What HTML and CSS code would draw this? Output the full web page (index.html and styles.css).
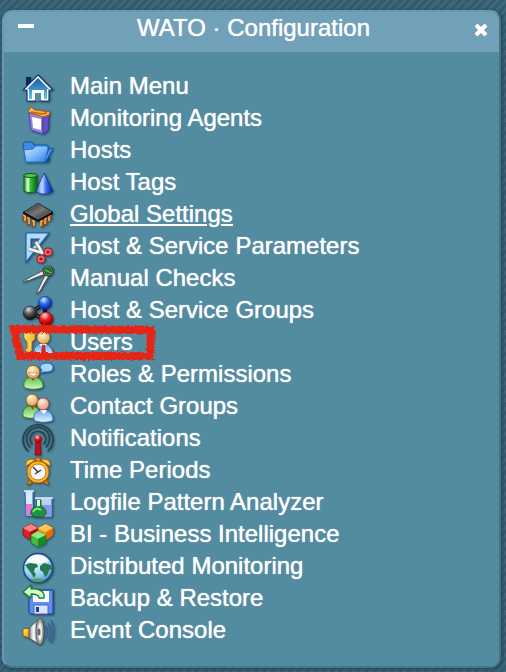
FILE: index.html
```html
<!DOCTYPE html>
<html lang="en">
<head>
<meta charset="utf-8">
<title>WATO · Configuration</title>
<link rel="stylesheet" href="styles.css">
</head>
<body>
<svg class="defs" aria-hidden="true">
  <defs>
    <linearGradient id="blue" x1="0" y1="0" x2="1" y2="1"><stop offset="0" stop-color="#d0ecff"/><stop offset=".5" stop-color="#7cbcf8"/><stop offset="1" stop-color="#2a78e0"/></linearGradient>
    <linearGradient id="roof" x1="0" y1="0" x2="0" y2="1"><stop offset="0" stop-color="#185a9d"/><stop offset="1" stop-color="#63c4f4"/></linearGradient>
    <linearGradient id="cyl" x1="0" y1="0" x2="1" y2="0"><stop offset="0" stop-color="#0b8d1e"/><stop offset=".3" stop-color="#e6ffe0"/><stop offset=".5" stop-color="#35bd35"/><stop offset="1" stop-color="#04680f"/></linearGradient>
    <linearGradient id="cone" x1="0" y1="0" x2="1" y2="0"><stop offset="0" stop-color="#2856d8"/><stop offset=".35" stop-color="#c8dcff"/><stop offset=".6" stop-color="#3a6ced"/><stop offset="1" stop-color="#0a1a9a"/></linearGradient>
    <linearGradient id="metal" x1="0" y1="0" x2="1" y2="0"><stop offset="0" stop-color="#777"/><stop offset=".4" stop-color="#fafafa"/><stop offset="1" stop-color="#777"/></linearGradient>
    <linearGradient id="chip" x1="0" y1="0" x2="1" y2="1"><stop offset="0" stop-color="#222"/><stop offset=".5" stop-color="#777"/><stop offset="1" stop-color="#222"/></linearGradient>
    <linearGradient id="gold" x1="0" y1="0" x2="1" y2="1"><stop offset="0" stop-color="#fff27a"/><stop offset="1" stop-color="#f08a00"/></linearGradient>
    <linearGradient id="greenbody" x1="0" y1="0" x2="0" y2="1"><stop offset="0" stop-color="#5cc24a"/><stop offset="1" stop-color="#d2f8b8"/></linearGradient>
    <linearGradient id="bluebody" x1="0" y1="0" x2="0" y2="1"><stop offset="0" stop-color="#6ba6ee"/><stop offset="1" stop-color="#e4f3ff"/></linearGradient>
    <radialGradient id="skin" cx=".4" cy=".3" r=".7"><stop offset="0" stop-color="#fff5d5"/><stop offset="1" stop-color="#e2a34f"/></radialGradient>
    <radialGradient id="pink" cx=".4" cy=".3" r=".7"><stop offset="0" stop-color="#fff0e5"/><stop offset="1" stop-color="#ee9280"/></radialGradient>
    <radialGradient id="ballblue" cx=".4" cy=".25" r=".7"><stop offset="0" stop-color="#d8eaff"/><stop offset=".5" stop-color="#286cf0"/><stop offset="1" stop-color="#0a26a8"/></radialGradient>
    <radialGradient id="ballred" cx=".4" cy=".25" r=".7"><stop offset="0" stop-color="#ffdede"/><stop offset=".5" stop-color="#f01818"/><stop offset="1" stop-color="#960000"/></radialGradient>
    <radialGradient id="ballgray" cx=".4" cy=".25" r=".7"><stop offset="0" stop-color="#ddd"/><stop offset=".5" stop-color="#555"/><stop offset="1" stop-color="#111"/></radialGradient>
    <radialGradient id="globe" cx=".4" cy=".25" r=".8"><stop offset="0" stop-color="#fff"/><stop offset=".6" stop-color="#9fd3f5"/><stop offset="1" stop-color="#3f88d0"/></radialGradient>
    <filter id="crayon" x="-5%" y="-20%" width="110%" height="140%"><feTurbulence type="fractalNoise" baseFrequency=".45" numOctaves="2" seed="4"/><feDisplacementMap in="SourceGraphic" scale="5" xChannelSelector="R" yChannelSelector="G"/></filter>
  </defs>
</svg>

<section class="snapin">
  <header class="head">
    <button class="tool" type="button" aria-label="Minimize"><svg viewBox="0 0 16 16"><path d="M0 8h16" stroke="#fff" stroke-width="4"/></svg></button>
    <h1 class="title">WATO · Configuration</h1>
    <button class="tool close" type="button" aria-label="Close"><svg viewBox="0 0 16 16"><path d="M3 3l10 10M13 3L3 13" stroke="#fff" stroke-width="4"/></svg></button>
  </header>
  <nav>
    <ul class="menu">
      <li class="item"><svg class="icon" viewBox="0 0 32 32"><path d="M4 5h5v8H4z" fill="#0b2560"/><path d="M16 3L1 18h4v11h8v-8h6v8h8V18h4z" fill="#fff" stroke="#123a70" stroke-width="1.2" stroke-linejoin="round"/><path d="M16 6L5 17h2v10h4v-8h10v8h4V17h2z" fill="url(#roof)"/><path d="M10 18h12v10h-3v-7h-6v7h-3z" fill="#fff"/><path d="M13 21h6v8h-6z" fill="#538ca1"/></svg><a href="#main">Main Menu</a></li>
      <li class="item"><svg class="icon" viewBox="0 0 32 32"><path d="M7 9l14 3v18L9 26z" fill="#9584e8" stroke="#5a48b4"/><path d="M21 12l6-2-1 17-5 3z" fill="#6550c8" stroke="#4938a0"/><path d="M10 13l9 2v11l-8-2z" fill="#fff"/><path d="M6 8l3-5 4 3 15 2-1 3-6 2z" fill="#ffbd50" stroke="#b45d08"/><path d="M9 8l11 2 5-1" fill="none" stroke="#c56f13" stroke-width="2"/></svg><a href="#agents">Monitoring Agents</a></li>
      <li class="item"><svg class="icon" viewBox="0 0 32 32"><path d="M1 8l2-2h7l2 3h13l1 2v15H4z" fill="#3c8ae6" stroke="#155ab0"/><path d="M25 24l6-12-4 1-4 10z" fill="#4b98ee" stroke="#155ab0"/><path d="M2 14l9-1 3-3h11l1 2-3 12-2 2H4z" fill="url(#blue)" stroke="#2a76d0"/><path d="M22 26c3-1 4-4 5-7l1 5-2 2z" fill="#0e49a5"/></svg><a href="#hosts">Hosts</a></li>
      <li class="item"><svg class="icon" viewBox="0 0 32 32"><path d="M2 7v16c2 2 11 2 13 0V7z" fill="url(#cyl)" stroke="#086410"/><ellipse cx="8.500" cy="7.500" rx="6.500" ry="2" fill="#55c452" stroke="#075c12"/><path d="M22 5l9 18c-2 4-15 4-17 0z" fill="url(#cone)" stroke="#1030a0" stroke-width=".7"/></svg><a href="#tags">Host Tags</a></li>
      <li class="item"><svg class="icon" viewBox="0 0 32 32"><g fill="none" stroke="#a34a05" stroke-width="3"><path d="M2 15v6M6 17v8M11 20v7M20 21v6M24 18v7M28 15v6"/></g><g fill="none" stroke="#ffb057" stroke-width="1.600"><path d="M1 15h2v6M5 18h2v6M10 21h2v5M21 21h-2v5M25 18h-2v6M29 15h-2v6"/></g><path d="M1 12L16 3l15 9v2l-15 8L1 14z" fill="#111"/><path d="M3 12l13-8 13 8-13 7z" fill="url(#chip)" stroke="#888" stroke-width=".6"/></svg><a class="current" href="#settings">Global Settings</a></li>
      <li class="item"><svg class="icon" viewBox="0 0 32 32"><path fill-rule="evenodd" d="M4 1h23L4 30zM9 7v10l8-10z" fill="#b5dbfc" stroke="#1d5fac" stroke-width="1.200"/><path d="M14 10l7 13M7 17l15 4" stroke="#777" stroke-width="4"/><path d="M14 10l7 12M7 17l14 4" stroke="#f6f6f6" stroke-width="2.500"/><g fill="none" stroke="#9d171d" stroke-width="4"><circle cx="26" cy="20" r="2.600"/><circle cx="19" cy="27" r="2.600"/></g><g fill="none" stroke="#ee656a" stroke-width="2"><circle cx="26" cy="20" r="2.600"/><circle cx="19" cy="27" r="2.600"/></g></svg><a href="#params">Host &amp; Service Parameters</a></li>
      <li class="item"><svg class="icon" viewBox="0 0 32 32"><path d="M24 5L1 17v1l23-8zM24 9l-10 21 3-2L28 10z" fill="#d5d5d5" stroke="#4b4b4b" stroke-width=".8"/><path d="M22 8L6 16M25 12l-8 15" stroke="#fff"/><circle cx="26" cy="7" r="5" fill="#b9c0ba" stroke="#333" stroke-width="1.200"/><circle cx="26" cy="7" r="3.300" fill="#178c20" stroke="#063b0a"/><path d="M23 6l6 3" stroke="#53e05b"/></svg><a href="#checks">Manual Checks</a></li>
      <li class="item"><svg class="icon" viewBox="0 0 32 32"><path d="M22 7L9 17l15 7z" fill="none" stroke="#111" stroke-width="4"/><path d="M22 7L9 17l15 7" fill="none" stroke="#777"/><circle cx="23" cy="7" r="6.500" fill="url(#ballblue)" stroke="#0a2c80" stroke-width=".6"/><circle cx="8" cy="17" r="6.800" fill="url(#ballgray)" stroke="#222" stroke-width=".6"/><circle cx="24" cy="23" r="7" fill="url(#ballred)" stroke="#800" stroke-width=".6"/></svg><a href="#groups">Host &amp; Service Groups</a></li>
      <li class="item marked"><svg class="icon" viewBox="0 0 32 32"><path d="M2 4l3-1 2 2 3-2 3 3v5l-3 3v14l-3 1-1-2-3 1v-3l2-1-2-2 2-2V14l-3-4z" fill="url(#gold)" stroke="#b66a00" stroke-width=".8"/><path d="M8 13v12" stroke="#fff39a"/><path d="M12 27c-1-8 3-11 9-11s10 4 10 11c-4 2-15 2-19 0z" fill="url(#bluebody)" stroke="#4275c3"/><path d="M17 16l4 4 4-4" fill="#fff"/><path d="M20 17h3l1 9-2 2-3-2z" fill="#c92d2d"/><circle cx="21.500" cy="9.500" r="6.500" fill="url(#skin)" stroke="#9c641e" stroke-width=".8"/></svg><a href="#users">Users</a><svg class="mark" viewBox="0 0 150 40" aria-hidden="true"><path d="M6 6L143 7l-1 26L12 33z" fill="none" stroke="#e52518" stroke-width="8" filter="url(#crayon)"/></svg></li>
      <li class="item"><svg class="icon" viewBox="0 0 32 32"><path d="M2 27c-1-7 3-10 9-10s10 3 10 10c-3 3-16 3-19 0z" fill="url(#greenbody)" stroke="#348626"/><path d="M9 18h4l-2 3z" fill="#d42a20"/><circle cx="11" cy="12" r="6.600" fill="url(#skin)" stroke="#95601d" stroke-width=".8"/><path d="M7 13h8c0 4-7 4-8 0z" fill="#fff" stroke="#b76c31" stroke-width=".6"/><path d="M18 13l2-3c-4-3-1-7 5-7 8 0 8 9 0 9h-3z" fill="#a8d8ff" stroke="#1c66c4"/></svg><a href="#roles">Roles &amp; Permissions</a></li>
      <li class="item"><svg class="icon" viewBox="0 0 32 32"><path d="M1 24c-1-7 3-10 8-10s9 3 9 10c-3 3-14 3-17 0z" fill="url(#greenbody)" stroke="#348626"/><path d="M8 14h4l-1 4z" fill="#d42a20"/><circle cx="10" cy="8" r="6" fill="url(#skin)" stroke="#95601d" stroke-width=".8"/><path d="M12 28c-1-7 3-10 9-10s10 3 10 10c-3 3-16 3-19 0z" fill="url(#bluebody)" stroke="#376fc2"/><path d="M18 18h7l-3 4z" fill="#fff"/><circle cx="21" cy="12" r="6" fill="url(#pink)" stroke="#a35145" stroke-width=".8"/></svg><a href="#contacts">Contact Groups</a></li>
      <li class="item"><svg class="icon" viewBox="0 0 32 32"><g fill="none" stroke="#26414c" stroke-width="1.600" stroke-linecap="round"><path d="M6 27a15 15 0 1 1 20 0"/><path d="M8 23a11.500 11.500 0 1 1 16 0"/><path d="M10 20a7.800 7.800 0 1 1 12 0"/></g><path d="M14 17h4l1 14h-6z" fill="#c80d18" stroke="#790008" stroke-width=".6"/><circle cx="16" cy="15" r="3.700" fill="url(#ballred)"/></svg><a href="#notifications">Notifications</a></li>
      <li class="item"><svg class="icon" viewBox="0 0 32 32"><path d="M7 24l-2 5 5-2M25 24l2 5-5-2" fill="#e48800" stroke="#9d5600"/><path d="M4 10c-1-5 4-8 9-6zM28 10c1-5-4-8-9-6z" fill="#ffd44c" stroke="#c37700"/><path d="M14 5V2h4v3" fill="#f6a71b" stroke="#a85e00"/><circle cx="16" cy="16" r="11" fill="#ffb32b" stroke="#b76600"/><circle cx="16" cy="16" r="8" fill="#f5f7ff" stroke="#d47900"/><path d="M11 11l5 5 3-2M16 16l-3 2" fill="none" stroke="#444" stroke-width="1.500"/></svg><a href="#periods">Time Periods</a></li>
      <li class="item"><svg class="icon" viewBox="0 0 32 32"><path d="M3 3h8v25H4z" fill="#d8eaff" stroke="#3367b6"/><path d="M4 16h6v11H4z" fill="#e774db"/><path d="M13 10h17v19H12z" fill="#b7d5fb" stroke="#285ba4"/><path d="M14 17h15v11H14z" fill="#9194ee"/><path d="M2 3h10M13 10h18" stroke="#eff8ff" stroke-width="1.500"/><path d="M14 12h5v6c8 4 6 11-1 11h-4c-7-1-7-7 0-11z" fill="#20943d" stroke="#0b622b"/><path d="M15 12h3v6h-3z" fill="#eaffef"/><path d="M11 24c2-4 5-4 8-2" stroke="#83e287" stroke-width="2" fill="none"/></svg><a href="#logfile">Logfile Pattern Analyzer</a></li>
      <li class="item"><svg class="icon" viewBox="0 0 32 32"><g stroke-width=".7" stroke-linejoin="round"><path d="M1 8l8-4 7 4v7l-8 5-7-5z" fill="#dc2025" stroke="#8e090d"/><path d="M1 8l8-4 7 4-8 4z" fill="#ff8585"/><path d="M8 12l8-4v7l-8 5z" fill="#b80c13"/><path d="M16 8l8-4 7 4v7l-7 5-8-5z" fill="#ff971c" stroke="#aa5200"/><path d="M16 8l8-4 7 4-7 4z" fill="#ffc65d"/><path d="M24 12l7-4v7l-7 5z" fill="#e66f00"/><path d="M9 15l7-4 8 4v8l-8 4-7-4z" fill="#42bd44" stroke="#13741a"/><path d="M9 15l7-4 8 4-8 4z" fill="#94e880"/><path d="M16 19l8-4v8l-8 4z" fill="#168c23"/></g></svg><a href="#bi">BI - Business Intelligence</a></li>
      <li class="item"><svg class="icon" viewBox="0 0 32 32"><circle cx="16" cy="16" r="14.500" fill="url(#globe)" stroke="#174b86" stroke-width="1.400"/><path d="M3 13l5-2 7 1 1 3-3 1-1 4 2 2-2 4-3-5-3-4zM18 14l4-3 7 2 1 4-3 1-1 4-3 3-2-5-3-2z" fill="#24784f"/><path d="M9 28c4-2 9-2 14 0-4 3-10 3-14 0z" fill="#4ba05b"/><path d="M5 9C9 1 22 1 27 9c-6 3-16 3-22 0z" fill="#fff" opacity=".8"/></svg><a href="#distributed">Distributed Monitoring</a></li>
      <li class="item"><svg class="icon" viewBox="0 0 32 32"><path d="M7 6h24v24H9l-2-2z" fill="#5d8ff3" stroke="#163b98"/><path d="M11 7h16v11H11z" fill="#f6f9ff"/><path d="M12 21h14v9H12z" fill="#dbe5f5" stroke="#5369a8"/><path d="M14 23h3v5h-3z" fill="#173f9e"/><path d="M1 8l8-7v4c9-1 14 3 13 9h-5c0-3-3-4-8-4v4z" fill="#dcffd0" stroke="#168427" stroke-width="1.300" stroke-linejoin="round"/></svg><a href="#backup">Backup &amp; Restore</a></li>
      <li class="item"><svg class="icon" viewBox="0 0 32 32"><path d="M1 13l7-1v10l-7-2z" fill="url(#gold)" stroke="#9c5c00"/><path d="M7 12L18 2v27L7 22z" fill="url(#metal)" stroke="#555"/><ellipse cx="18" cy="15.500" rx="4" ry="13" fill="#aaa" stroke="#555"/><ellipse cx="18" cy="15.500" rx="2" ry="9" fill="#eee"/><ellipse cx="17" cy="16" rx="1.500" ry="3.500" fill="#666"/><path d="M24 10c2 4 2 8 0 12M26 7c4 6 4 13 0 18M29 4c4 7 4 16 0 23" fill="none" stroke="#3f5a9c" stroke-width="1.300"/></svg><a href="#events">Event Console</a></li>
    </ul>
  </nav>
</section>
</body>
</html>
```
FILE: styles.css
```css
* {
  box-sizing: border-box;
}

body {
  margin: 0;
  padding: 10px 5px 4px 2px;
  color: #fff;
  font: 24px/28px "Liberation Sans", Arial, sans-serif;
  text-shadow: 0 0 1px #fff;
  background: repeating-linear-gradient(135deg, #345c70 0 3px, #3d677b 3px 6px);
}

.defs {
  position: absolute;
  width: 0;
  height: 0;
}

.snapin {
  overflow: hidden;
  border: 2px solid #669bb0;
  border-right-color: #457587;
  border-bottom-color: #457587;
  border-radius: 10px;
  background: #538ca1;
  box-shadow: 1px 1px 4px #203f4e;
}

.head {
  display: flex;
  align-items: flex-start;
  justify-content: space-between;
  height: 40px;
  padding: 2px 10px 0 14px;
  background: #70a1b9;
}

.title {
  margin: 0;
  font-size: 24px;
  font-weight: normal;
}

.tool {
  display: flex;
  align-items: flex-start;
  width: 16px;
  height: 28px;
  padding: 4px 0 0;
  border: 0;
  background: none;
}

.tool svg {
  display: block;
  width: 16px;
  height: 16px;
}

.close {
  padding-top: 8px;
}

.menu {
  margin: 0;
  padding: 20px 18px 18px;
  list-style: none;
}

.item {
  position: relative;
  display: flex;
  align-items: flex-start;
  gap: 16px;
  height: 32px;
}

.icon {
  flex: none;
  width: 32px;
  height: 32px;
  overflow: visible;
  filter: drop-shadow(1px 1px 1px #2a4d5c);
}

.item a {
  color: inherit;
  text-decoration: none;
}

.item .current {
  text-decoration: underline;
  text-decoration-thickness: 2px;
  text-underline-offset: 2px;
}

.mark {
  position: absolute;
  top: -5px;
  left: -14px;
  width: 150px;
  height: 40px;
  pointer-events: none;
}
```
